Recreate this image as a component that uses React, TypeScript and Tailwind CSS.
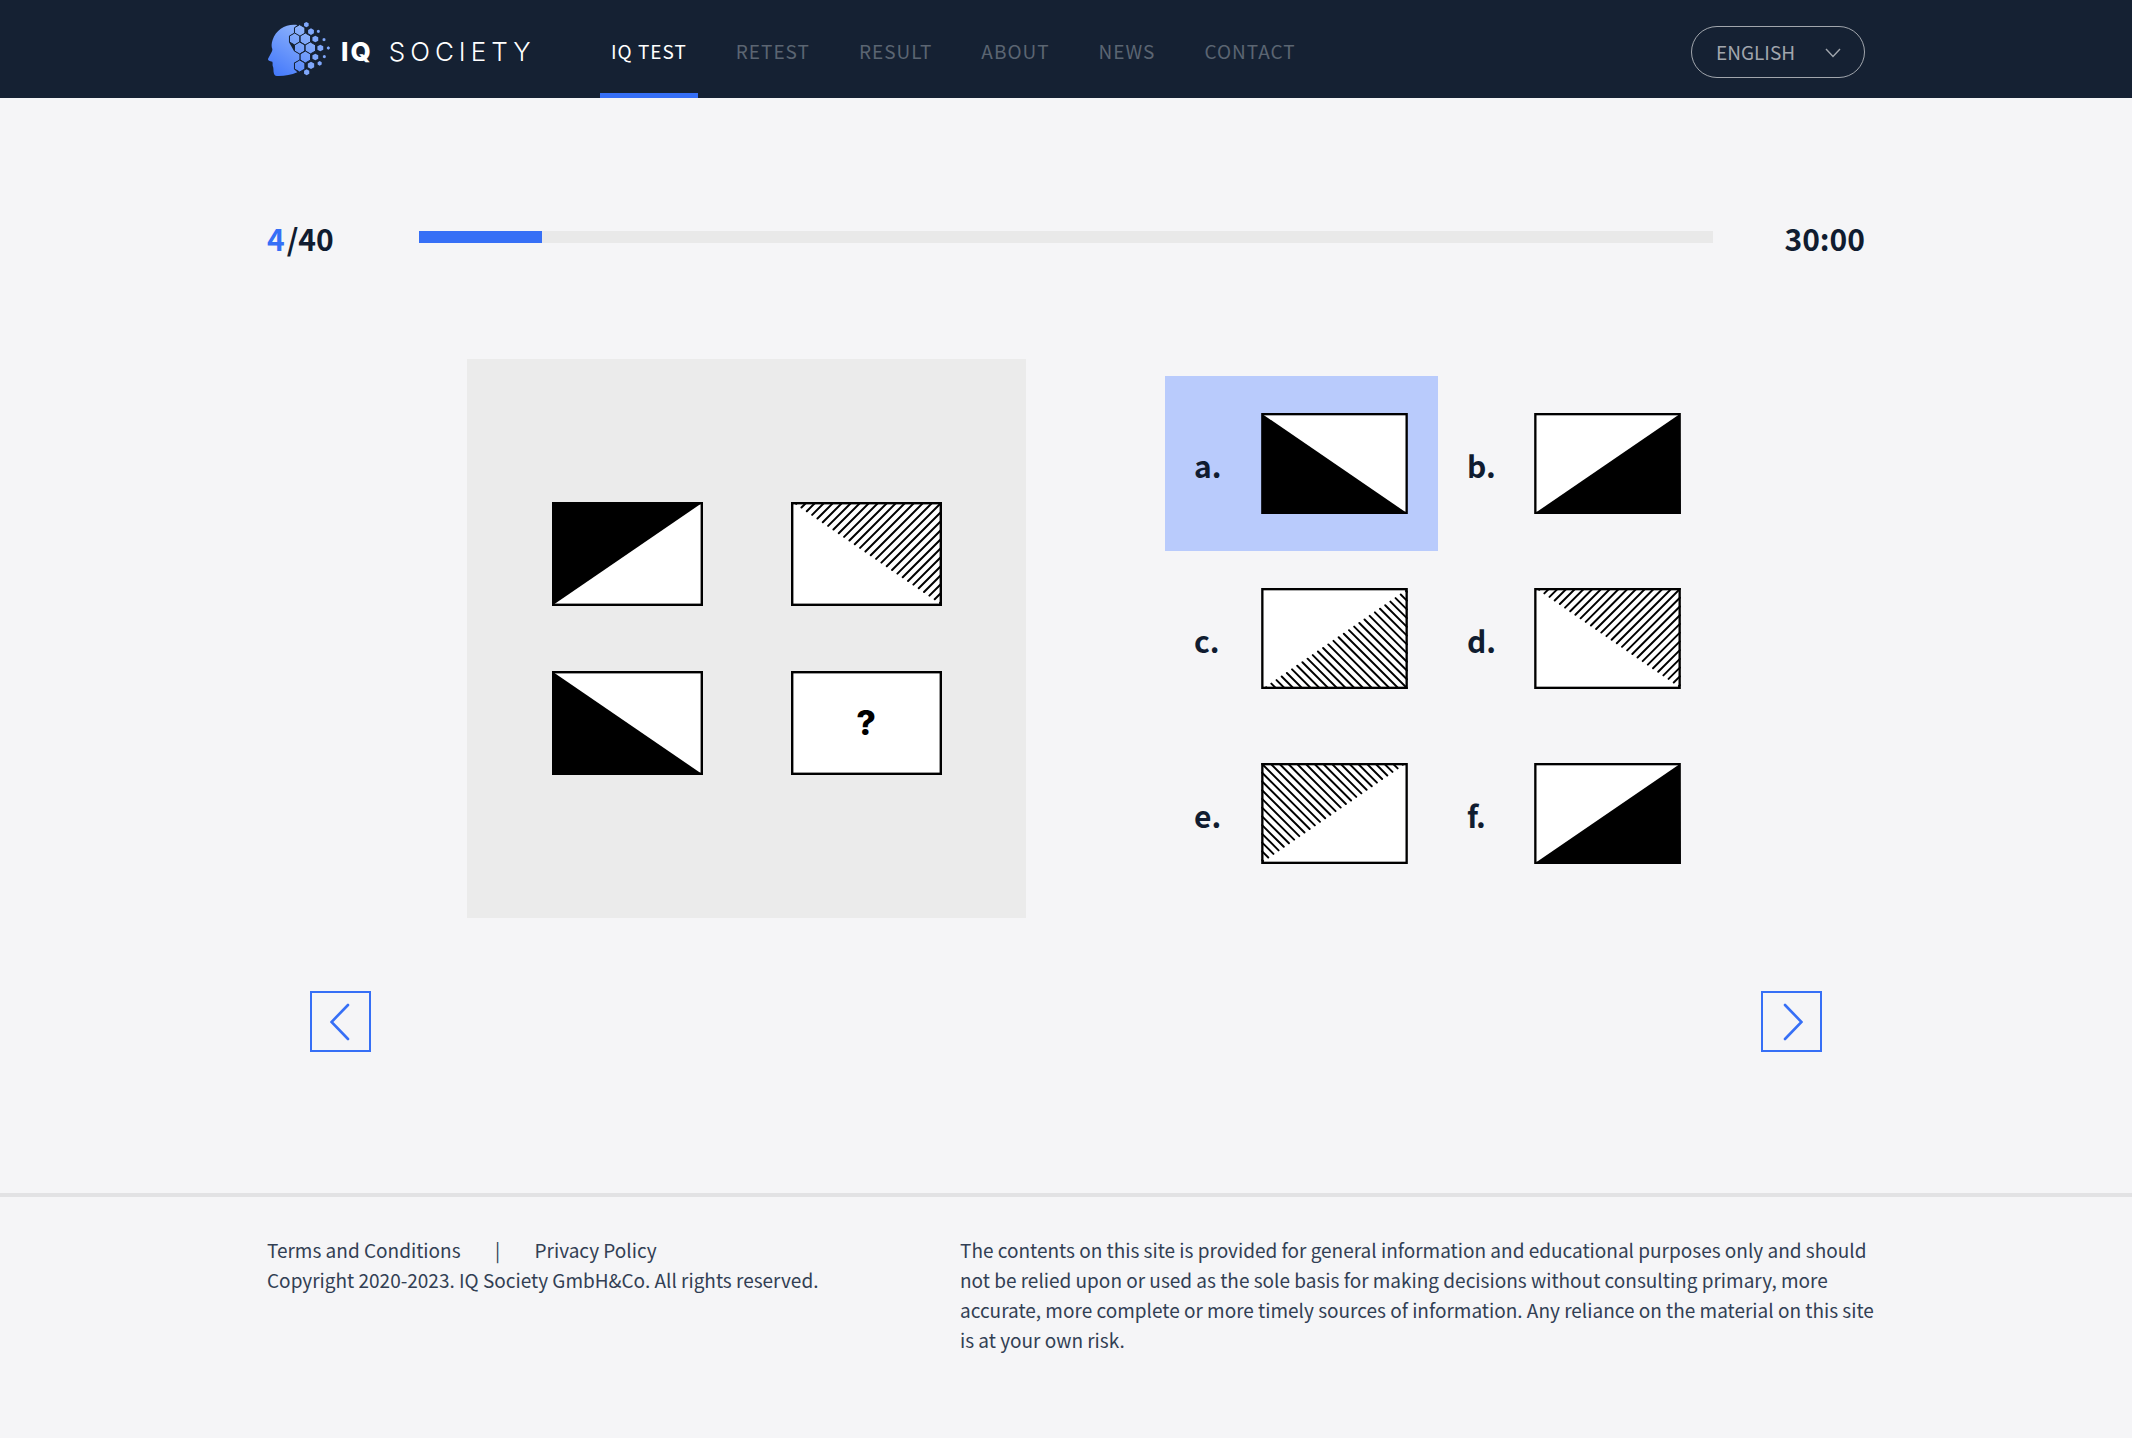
import { useState } from "react";

type Shape = "solid-tl" | "solid-bl" | "solid-br" | "hatch-tr" | "hatch-br" | "hatch-tl";

const W = 151;
const H = 104;

const SOLID_POINTS: Record<string, string> = {
  "solid-tl": `0,0 ${W - 1},1 1,${H - 1}`,
  "solid-bl": `1,1 1,${H} ${W - 1},${H - 1}`,
  "solid-br": `${W - 1},1 ${W},${H} 1,${H - 1}`,
};

const HATCH_FLIP: Record<string, string | undefined> = {
  "hatch-tr": undefined,
  "hatch-br": `translate(0 ${H}) scale(1 -1)`,
  "hatch-tl": `translate(${W} 0) scale(-1 1)`,
};

/* Diagonal strokes that run from the card's diagonal to its top and right edges. */
function hatchLines() {
  const slope = H / W;
  const lines = [];
  for (let c = 7; c < W + H; c += 9) {
    const x1 = c / (1 + slope);
    const x2 = Math.min(c, W - 1);
    lines.push({ x1: x1 + 1, y1: c - x1 - 1, x2, y2: c - x2 });
  }
  return lines;
}

function Card({ shape, className }: { shape?: Shape; className: string }) {
  return (
    <svg viewBox={`0 0 ${W} ${H}`} className={className} aria-hidden="true">
      <rect x="1" y="1" width={W - 2} height={H - 2} fill="#fff" />
      {shape && SOLID_POINTS[shape] && <polygon points={SOLID_POINTS[shape]} fill="#000" />}
      {shape && shape.startsWith("hatch") && (
        <g transform={HATCH_FLIP[shape]} stroke="#000" strokeWidth="2" strokeLinecap="round">
          {hatchLines().map((l) => (
            <line key={l.x1} {...l} />
          ))}
        </g>
      )}
      <rect x="1.2" y="1.2" width={W - 2.4} height={H - 2.4} fill="none" stroke="#000" strokeWidth="2.4" />
    </svg>
  );
}

function hexagon(cx: number, cy: number, r: number) {
  return [-90, -30, 30, 90, 150, 210]
    .map((a) => {
      const t = (a * Math.PI) / 180;
      return `${(cx + r * Math.cos(t)).toFixed(1)},${(cy + r * Math.sin(t)).toFixed(1)}`;
    })
    .join(" ");
}

const BIG_CELLS = [
  [131, 59], [116, 84], [148, 84], [131, 111], [163, 111], [148, 138], [131, 165],
];
const SMALL_CELLS = [
  [151, 41, 8], [165, 62, 10], [187, 61, 5], [178, 84, 10], [204, 86, 5], [193, 111, 10],
  [217, 111, 5], [178, 138, 10], [205, 137, 5], [165, 163, 11], [191, 157, 7], [152, 184, 9],
];

function LogoMark() {
  return (
    <svg viewBox="33 30 192 168" className="h-14 w-16" aria-hidden="true">
      <defs>
        <linearGradient id="mark" gradientUnits="userSpaceOnUse" x1="60" y1="195" x2="150" y2="60">
          <stop offset="0" stopColor="#4479fb" />
          <stop offset="1" stopColor="#8db2fb" />
        </linearGradient>
      </defs>
      <path
        d="M124 42 C92 37 60 55 50 86 C46 98 46 107 49 114 C50 121 42 131 36 144 C35 149 41 151 49 152 C51 158 49 160 50 164 C54 172 51 180 54 188 C56 194 60 195 68 195 C88 195 106 192 124 184 L114 174 L114 155 L131 147 L131 129 L114 120 L99 94 L99 75 L116 67 L116 50 Z"
        fill="url(#mark)"
      />
      <g fill="url(#mark)" stroke="#152133" strokeWidth="3">
        {BIG_CELLS.map(([x, y]) => (
          <polygon key={`${x}-${y}`} points={hexagon(x, y, 18)} />
        ))}
      </g>
      <g fill="#7fa7fb">
        {SMALL_CELLS.map(([x, y, r]) => (
          <polygon key={`${x}-${y}`} points={hexagon(x, y, r)} />
        ))}
      </g>
    </svg>
  );
}

const NAV = ["IQ TEST", "RETEST", "RESULT", "ABOUT", "NEWS", "CONTACT"];

const OPTIONS: { id: string; shape: Shape }[] = [
  { id: "a", shape: "solid-bl" },
  { id: "b", shape: "solid-br" },
  { id: "c", shape: "hatch-br" },
  { id: "d", shape: "hatch-tr" },
  { id: "e", shape: "hatch-tl" },
  { id: "f", shape: "solid-br" },
];

function Header() {
  return (
    <header className="bg-[#152133]">
      <div className="mx-auto flex h-[98px] max-w-[1598px] items-center justify-between">
        <div className="flex h-full items-center">
          <a href="#home" className="flex w-[273px] items-center gap-[10px] text-white">
            <LogoMark />
            <span className="flex gap-4 pt-1.5 font-['Inter',sans-serif] text-[26px] leading-8">
              <span className="font-extrabold tracking-[2px]">IQ</span>
              <span className="font-light tracking-[5px]">SOCIETY</span>
            </span>
          </a>
          <nav className="ml-[60px] flex h-full gap-[27px]">
            {NAV.map((item, i) => (
              <a
                key={item}
                href="#nav"
                aria-current={i === 0 ? "page" : undefined}
                className={
                  i === 0
                    ? "flex items-center border-y-[5px] border-t-transparent border-b-[#366ff6] px-[11px] pt-1 text-[19px] tracking-[1px] text-white"
                    : "flex items-center px-[11px] pt-1 text-[19px] tracking-[1px] text-[#5b6572]"
                }
              >
                {item}
              </a>
            ))}
          </nav>
        </div>
        <div className="relative mt-1.5">
          <select
            aria-label="Language"
            className="h-[52px] w-[174px] appearance-none rounded-full border border-[#a1a6ad] bg-transparent pl-6 text-[19px] text-[#a1a6ad]"
          >
            <option>ENGLISH</option>
          </select>
          <svg
            viewBox="0 0 16 10"
            className="pointer-events-none absolute top-[22px] right-6 h-[10px] w-4"
            fill="none"
            stroke="#a1a6ad"
            strokeWidth="1.4"
            aria-hidden="true"
          >
            <path d="M1 1 L8 8.5 L15 1" />
          </svg>
        </div>
      </div>
    </header>
  );
}

export default function App() {
  const [answer, setAnswer] = useState("a");
  return (
    <div className="min-h-screen bg-[#f5f5f7] font-['Noto_Sans_CJK_SC',sans-serif] text-[#101c30]">
      <Header />

      <main className="mx-auto max-w-[1598px]">
        <div className="flex items-center justify-between pt-[118px] text-[30px] leading-[44px] font-bold">
          <p className="w-[152px]">
            <span className="mr-[2px] text-[#366ff6]">4</span>/40
          </p>
          <div
            role="progressbar"
            aria-label="Test progress"
            aria-valuenow={4}
            aria-valuemax={40}
            className="mb-0.5 h-3 flex-1 bg-[#e9e9e9]"
          >
            <div className="h-full w-[123px] bg-[#366ff6]" />
          </div>
          <p className="w-[152px] text-right">30:00</p>
        </div>

        <div className="mt-[99px] flex items-center pl-[200px]">
          <section
            aria-label="Question"
            className="grid h-[559px] w-[559px] grid-cols-[151px_151px] place-content-center gap-x-[88px] gap-y-[65px] bg-[#ebebeb]"
          >
            <Card shape="solid-tl" className="h-[104px] w-[151px]" />
            <Card shape="hatch-tr" className="h-[104px] w-[151px]" />
            <Card shape="solid-bl" className="h-[104px] w-[151px]" />
            <div className="grid place-items-center *:col-start-1 *:row-start-1">
              <Card className="h-[104px] w-[151px]" />
              <span className="font-['Inter',sans-serif] text-[34px] leading-none font-extrabold text-black">?</span>
            </div>
          </section>

          <div role="radiogroup" aria-label="Answers" className="ml-[139px] grid grid-cols-[273px_273px]">
            {OPTIONS.map(({ id, shape }) => (
              <label
                key={id}
                className="flex h-[175px] cursor-pointer items-center justify-between pr-[30px] pl-[29px] has-checked:bg-[#b9cbfc]"
              >
                <input
                  type="radio"
                  name="answer"
                  value={id}
                  checked={answer === id}
                  onChange={() => setAnswer(id)}
                  className="sr-only"
                />
                <span className="pt-0.5 text-[30px] leading-[44px] font-bold">{id}.</span>
                <Card shape={shape} className="h-[101px] w-[147px]" />
              </label>
            ))}
          </div>
        </div>

        <div className="flex justify-between px-[43px] pt-[73px] pb-[141px]">
          <button
            type="button"
            aria-label="Previous question"
            className="grid size-[61px] place-items-center border-2 border-[#366ff6] pr-[2px]"
          >
            <svg viewBox="0 0 20 38" className="h-[38px] w-5" fill="none" stroke="#366ff6" strokeWidth="2.6" strokeLinecap="round" aria-hidden="true">
              <path d="M18 2 L1.5 19 L18 36" />
            </svg>
          </button>
          <button
            type="button"
            aria-label="Next question"
            className="grid size-[61px] place-items-center border-2 border-[#366ff6] pl-[2px]"
          >
            <svg viewBox="0 0 20 38" className="h-[38px] w-5" fill="none" stroke="#366ff6" strokeWidth="2.6" strokeLinecap="round" aria-hidden="true">
              <path d="M2 2 L18.5 19 L2 36" />
            </svg>
          </button>
        </div>
      </main>

      <footer className="border-t-4 border-[#e2e2e4] pt-[38px] text-[#323f54]">
        <div className="mx-auto flex max-w-[1598px] justify-between text-[19px] leading-[30px]">
          <div>
            <p className="flex">
              <a href="#terms">Terms and Conditions</a>
              <span className="w-[74px] text-center">|</span>
              <a href="#privacy">Privacy Policy</a>
            </p>
            <p>Copyright 2020-2023. IQ Society GmbH&amp;Co. All rights reserved.</p>
          </div>
          <p className="-mr-4 w-[921px]">
            The contents on this site is provided for general information and educational purposes only and should not
            be relied upon or used as the sole basis for making decisions without consulting primary, more accurate,
            more complete or more timely sources of information. Any reliance on the material on this site is at your
            own risk.
          </p>
        </div>
      </footer>
    </div>
  );
}
